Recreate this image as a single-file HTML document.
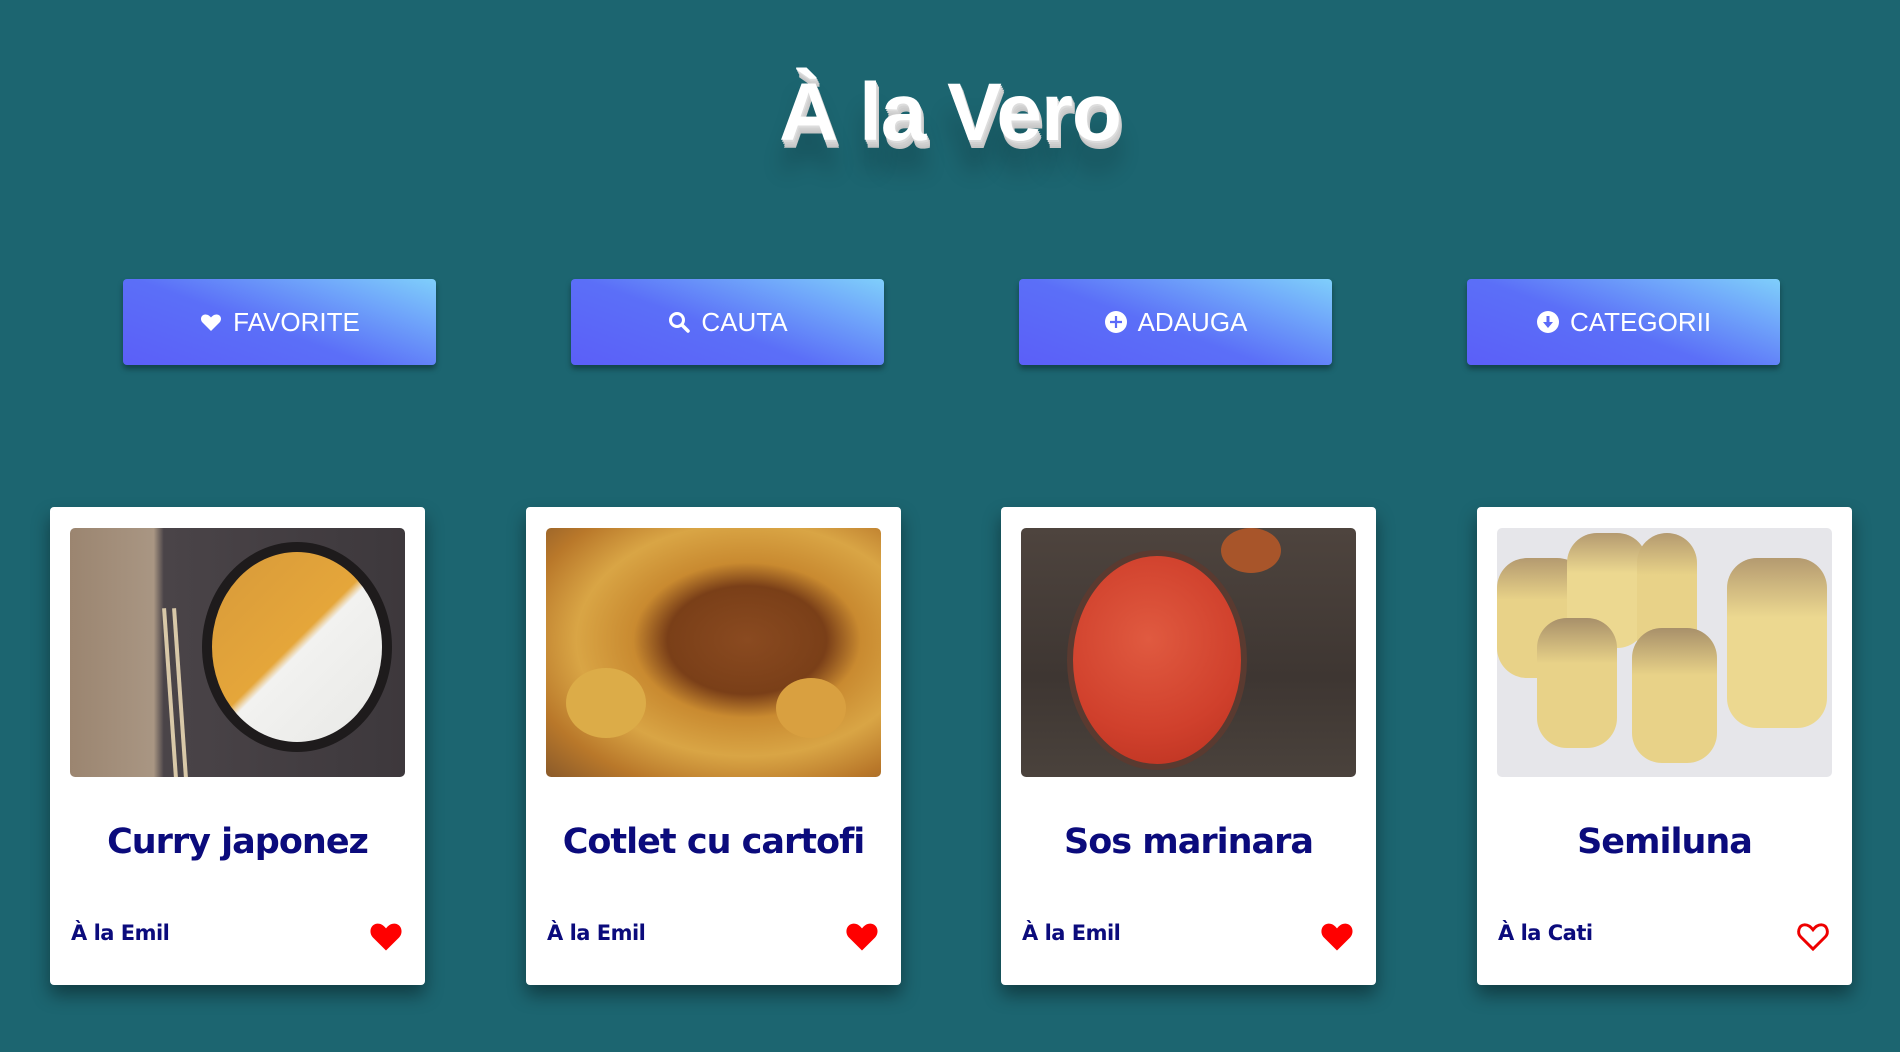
<!DOCTYPE html>
<html><head><meta charset="utf-8"><style>
*{margin:0;padding:0;box-sizing:border-box}
body{width:1900px;height:1052px;background:#1c6570;font-family:"Liberation Sans",sans-serif;position:relative;overflow:hidden}
h1{position:absolute;left:0;width:1900px;top:66px;text-align:center;font-size:82px;font-weight:bold;color:#fff;letter-spacing:-1px;
text-shadow:1px 2px 0 #ddd,2px 4px 0 #d2d2d2,3px 6px 0 #ccc,3px 8px 0 #c6c6c6,0 30px 22px rgba(0,0,0,.22)}
.btn{position:absolute;top:279px;width:313px;height:86px;border-radius:4px;background:linear-gradient(20deg,#5b5ff8 0%,#5b6ff8 45%,#7fcffb 100%);box-shadow:0 4px 6px rgba(0,0,0,.35);color:#fff;font-size:26px;display:flex;align-items:center;justify-content:center;gap:10px}
.btn svg{width:24px;height:24px}
.card{position:absolute;top:507px;width:375px;height:478px;background:#fff;border-radius:4px;box-shadow:0 10px 18px rgba(0,0,0,.4)}
.img{position:absolute;left:20px;top:21px;width:335px;height:249px;border-radius:5px;overflow:hidden}
.t{position:absolute;top:315px;width:100%;text-align:center;font-size:35px;font-weight:bold;color:#0b0b7c;font-family:"DejaVu Sans","Liberation Sans",sans-serif;letter-spacing:-1px}
.a{position:absolute;left:21px;top:414px;font-size:21px;font-weight:bold;color:#0b0b7c;font-family:"DejaVu Sans",sans-serif;letter-spacing:-.5px}
.h{position:absolute;left:318px;top:413px;width:36px;height:32px}
</style></head><body>
<h1>À la Vero</h1>

<div class="btn" style="left:123px"><svg viewBox="0 0 24 24"><path d="M12 21 3.5 12.5C1 10 1.5 5 6 4.5c2.5-.3 4.5 1.2 6 3 1.5-1.8 3.5-3.3 6-3 4.5.5 5 5.5 2.5 8z" fill="#fff"/></svg>FAVORITE</div>
<div class="btn" style="left:571px"><svg viewBox="0 0 24 24"><circle cx="10" cy="10" r="6.5" fill="none" stroke="#fff" stroke-width="3"/><path d="M15 15l6 6" stroke="#fff" stroke-width="3.5" stroke-linecap="round"/></svg>CAUTA</div>
<div class="btn" style="left:1019px"><svg viewBox="0 0 24 24"><circle cx="12" cy="12" r="11" fill="#fff"/><path d="M12 6v12M6 12h12" stroke="#5b6af8" stroke-width="2.2"/></svg>ADAUGA</div>
<div class="btn" style="left:1467px"><svg viewBox="0 0 24 24"><circle cx="12" cy="12" r="11" fill="#fff"/><path d="M12 6v8" stroke="#5b6af8" stroke-width="3"/><path d="M7 12l5 6 5-6z" fill="#5b6af8"/></svg>CATEGORII</div>

<div class="card" style="left:50px">
 <div class="img" style="background:linear-gradient(90deg,#9b8570 0%,#a99683 25%,#4a4448 28%,#3d383c 100%)">
  <div style="position:absolute;left:98px;top:80px;width:4px;height:170px;background:#d8c8a8;transform:rotate(-4deg)"></div>
  <div style="position:absolute;left:108px;top:80px;width:4px;height:170px;background:#d8c8a8;transform:rotate(-4deg)"></div>
  <div style="position:absolute;left:132px;top:14px;width:190px;height:210px;border-radius:50%;background:#1e1b1c"></div>
  <div style="position:absolute;left:142px;top:24px;width:170px;height:190px;border-radius:50%;background:linear-gradient(135deg,#d79a3a 0%,#e5a63a 48%,#f2f2f0 52%,#e8e8e6 100%)"></div>
 </div>
 <div class="t">Curry japonez</div><div class="a">À la Emil</div>
 <svg class="h" viewBox="0 0 24 22"><path d="M12 21 3 12C0 9 1 3 6 2.5c2.5-.2 4.5 1.3 6 3.3 1.5-2 3.5-3.5 6-3.3 5 .5 6 6.5 3 9.5z" fill="#f00"/></svg>
</div>

<div class="card" style="left:526px">
 <div class="img" style="background:radial-gradient(ellipse at 60% 45%,#8a4a20 0%,#7a3f18 28%,#c98a30 40%,#d9a545 60%,#b9782a 80%,#8a5a2a 100%)">
  <div style="position:absolute;left:230px;top:150px;width:70px;height:60px;border-radius:50%;background:#d9a040"></div>
  <div style="position:absolute;left:20px;top:140px;width:80px;height:70px;border-radius:50%;background:#dcac48"></div>
 </div>
 <div class="t">Cotlet cu cartofi</div><div class="a">À la Emil</div>
 <svg class="h" viewBox="0 0 24 22"><path d="M12 21 3 12C0 9 1 3 6 2.5c2.5-.2 4.5 1.3 6 3.3 1.5-2 3.5-3.5 6-3.3 5 .5 6 6.5 3 9.5z" fill="#f00"/></svg>
</div>

<div class="card" style="left:1001px">
 <div class="img" style="background:linear-gradient(180deg,#4e443e,#3e3632 60%,#4a423c)">
  <div style="position:absolute;left:46px;top:22px;width:180px;height:220px;border-radius:50%;background:#5a3a30"></div>
  <div style="position:absolute;left:52px;top:28px;width:168px;height:208px;border-radius:50%;background:radial-gradient(circle at 45% 40%,#e05a40,#d0402c 60%,#b8301f)"></div>
  <div style="position:absolute;left:200px;top:0;width:60px;height:45px;border-radius:50%;background:#a8552a"></div>
 </div>
 <div class="t">Sos marinara</div><div class="a">À la Emil</div>
 <svg class="h" viewBox="0 0 24 22"><path d="M12 21 3 12C0 9 1 3 6 2.5c2.5-.2 4.5 1.3 6 3.3 1.5-2 3.5-3.5 6-3.3 5 .5 6 6.5 3 9.5z" fill="#f00"/></svg>
</div>

<div class="card" style="left:1477px">
 <div class="img" style="background:#e6e6ea">
  <div style="position:absolute;left:0;top:30px;width:90px;height:120px;border-radius:30px;background:linear-gradient(#b49a70,#e8d288 35%)"></div>
  <div style="position:absolute;left:70px;top:5px;width:80px;height:115px;border-radius:30px;background:linear-gradient(#b49a70,#ecd890 35%)"></div>
  <div style="position:absolute;left:40px;top:90px;width:80px;height:130px;border-radius:30px;background:linear-gradient(#a8906a,#e8d288 35%)"></div>
  <div style="position:absolute;left:140px;top:5px;width:60px;height:140px;border-radius:30px;background:linear-gradient(#b49a70,#e8d288 30%)"></div>
  <div style="position:absolute;left:135px;top:100px;width:85px;height:135px;border-radius:30px;background:linear-gradient(#a8906a,#e8d288 35%)"></div>
  <div style="position:absolute;left:230px;top:30px;width:100px;height:170px;border-radius:30px;background:linear-gradient(#b49a70,#ecd890 35%)"></div>
 </div>
 <div class="t">Semiluna</div><div class="a">À la Cati</div>
 <svg class="h" viewBox="0 0 24 22"><path d="M12 20 3.5 11.5C1 9 2 3.5 6.2 3.3c2.4-.1 4.3 1.4 5.8 3.4 1.5-2 3.4-3.5 5.8-3.4 4.2.2 5.2 5.7 2.7 8.2z" fill="none" stroke="#e00" stroke-width="2"/></svg>
</div>
</body></html>
